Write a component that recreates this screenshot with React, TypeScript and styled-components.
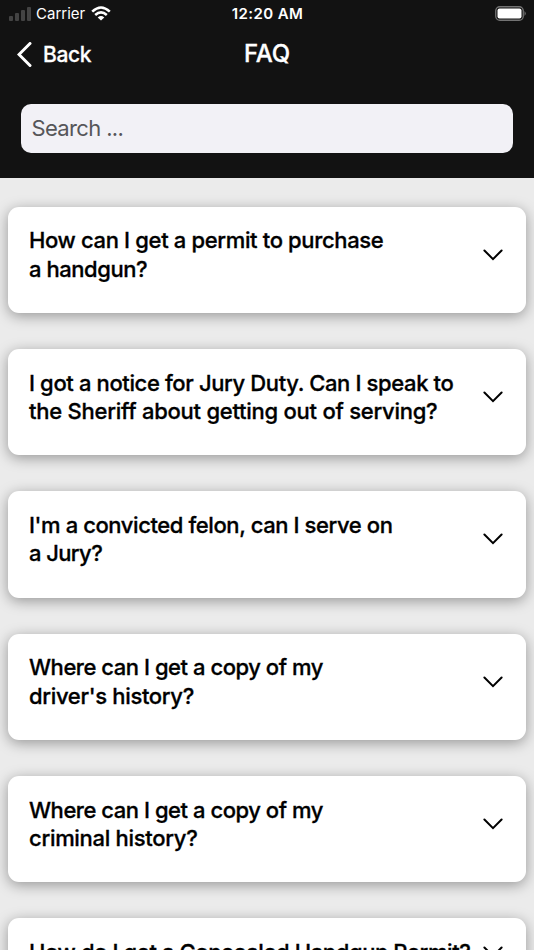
import React from "react";
import styled, { createGlobalStyle } from "styled-components";

const Global = createGlobalStyle`
  * { box-sizing: border-box; }
  body { margin: 0; background: #ebebeb; font-family: Inter, sans-serif; overflow: hidden; }
`;

const Screen = styled.main`
  width: 534px;
  height: 950px;
  overflow: hidden;
  background: #ebebeb;
`;
const Header = styled.header`
  height: 178px;
  background: #121212;
  color: #fff;
`;
const StatusBar = styled.div`
  height: 27px;
  display: grid;
  grid-template-columns: 1fr auto 1fr;
  align-items: center;
  padding: 0 8px 0 9px;
  font-size: 15px;
`;
const Carrier = styled.div`
  display: flex;
  align-items: center;
  gap: 5px;
`;
const WifiIcon = styled.svg`
  margin-left: 1px;
`;
const Time = styled.div`
  font-weight: 600;
  letter-spacing: 0.4px;
`;
const Battery = styled.div`
  display: flex;
  justify-content: flex-end;
`;
const NavBar = styled.nav`
  height: 53px;
  display: grid;
  grid-template-columns: 1fr auto 1fr;
  align-items: center;
  padding: 0 17px;
`;
const Back = styled.div`
  display: flex;
  align-items: center;
  gap: 10px;
  padding-top: 2px;
  font-size: 21px;
  font-weight: 500;
  letter-spacing: -0.4px;
  -webkit-text-stroke: 0.3px currentColor;
`;
const Title = styled.h1`
  margin: 0;
  font-size: 24px;
  font-weight: 500;
  letter-spacing: -0.2px;
  -webkit-text-stroke: 0.3px currentColor;
`;
const SearchField = styled.input`
  display: block;
  width: 492px;
  height: 49px;
  margin: 23.5px 21px 0;
  padding: 0 10.5px;
  border: 0;
  border-radius: 10px;
  background: #f2f1f6;
  font: 400 22px Inter, sans-serif;
  letter-spacing: -0.65px;
  &::placeholder { color: #565659; opacity: 1; }
`;
const List = styled.section`
  display: flex;
  flex-direction: column;
  gap: 36.1px;
  padding: 28.5px 8px 0;
`;
const Card = styled.article`
  flex: none;
  display: flex;
  align-items: center;
  justify-content: space-between;
  padding: 19.7px 23px 29.6px 21px;
  border-radius: 11px;
  background: #fff;
  box-shadow: 0 3px 14px rgba(0, 0, 0, 0.36);
`;
const Question = styled.h2`
  margin: 0;
  font-size: 22px;
  line-height: 28.5px;
  font-weight: 500;
  white-space: nowrap;
  color: #000;
  -webkit-text-stroke: 0.3px currentColor;
`;
const Line = styled.span<{ $tracking: number }>`
  display: block;
  letter-spacing: ${({ $tracking }) => $tracking}px;
`;
const Chevron = styled.svg`
  flex: none;
`;

type QuestionLine = { text: string; tracking: number };

const questions: QuestionLine[][] = [
  [
    { text: "How can I get a permit to purchase", tracking: -0.35 },
    { text: "a handgun?", tracking: -0.45 },
  ],
  [
    { text: "I got a notice for Jury Duty. Can I speak to", tracking: -0.37 },
    { text: "the Sheriff about getting out of serving?", tracking: -0.25 },
  ],
  [
    { text: "I'm a convicted felon, can I serve on", tracking: -0.41 },
    { text: "a Jury?", tracking: -0.6 },
  ],
  [
    { text: "Where can I get a copy of my", tracking: -0.46 },
    { text: "driver's history?", tracking: -0.32 },
  ],
  [
    { text: "Where can I get a copy of my", tracking: -0.46 },
    { text: "criminal history?", tracking: -0.3 },
  ],
  [{ text: "How do I get a Concealed Handgun Permit?", tracking: -0.38 }],
];

export default function App() {
  return (
    <Screen>
      <Global />
      <Header>
        <StatusBar>
          <Carrier>
            <svg width="22" height="14" fill="#434343">
              <rect x="0" y="9" width="4" height="5" rx="1" />
              <rect x="6" y="6" width="4" height="8" rx="1" />
              <rect x="12" y="3" width="4" height="11" rx="1" />
              <rect x="18" y="0" width="4" height="14" rx="1" />
            </svg>
            Carrier
            <WifiIcon width="20" height="15" fill="none" stroke="#fff" strokeWidth="2.6">
              <path d="M1.2 5.6Q10-2.6 18.8 5.6M4.2 9Q10 3.8 15.8 9" />
              <path d="M6.7 11.4Q10 8.6 13.3 11.4L10 14.6Z" fill="#fff" stroke="none" />
            </WifiIcon>
          </Carrier>
          <Time>12:20 AM</Time>
          <Battery>
            <svg width="31" height="15">
              <rect x="0.75" y="0.75" width="27.5" height="13.5" rx="4" fill="none" stroke="#737373" strokeWidth="1.3" />
              <rect x="2.5" y="2.5" width="24" height="10" rx="2" fill="#fff" />
              <path d="M29.5 5Q32 7.5 29.5 10Z" fill="#737373" />
            </svg>
          </Battery>
        </StatusBar>
        <NavBar>
          <Back>
            <svg width="16" height="26" fill="none" stroke="#fff" strokeWidth="3" strokeLinecap="round">
              <path d="M13 1.5L2 12.5L13 23.5" />
            </svg>
            Back
          </Back>
          <Title>FAQ</Title>
        </NavBar>
        <SearchField placeholder="Search ..." />
      </Header>
      <List>
        {questions.map((lines) => (
          <Card key={lines.map(({ text }) => text).join(" ")}>
            <Question>
              {lines.map(({ text, tracking }) => (
                <Line key={text} $tracking={tracking}>{text}</Line>
              ))}
            </Question>
            <Chevron width="20" height="12" fill="none" stroke="#000" strokeWidth="2" strokeLinecap="round">
              <path d="M1.4 1.5L10 10.1L18.6 1.5" />
            </Chevron>
          </Card>
        ))}
      </List>
    </Screen>
  );
}
